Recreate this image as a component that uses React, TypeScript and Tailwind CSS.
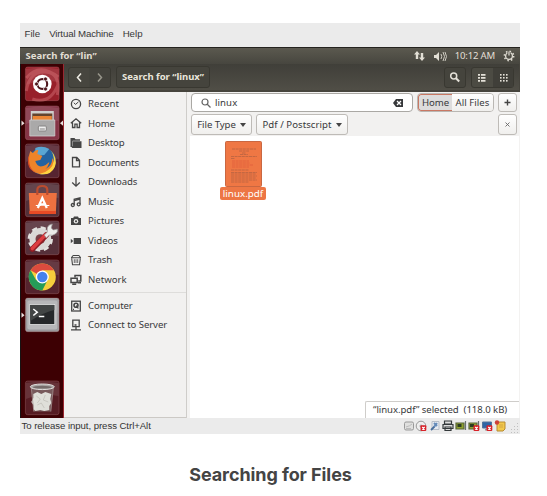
import React from "react";

const rows = [
  { name: "Recent", tracking: "tracking-[0.02px]" },
  { name: "Home", tracking: "tracking-[-0.1px]" },
  { name: "Desktop", tracking: "tracking-[-0.1px]" },
  { name: "Documents", tracking: "tracking-[-0.08px]" },
  { name: "Downloads", tracking: "tracking-[-0.12px]" },
  { name: "Music", tracking: "tracking-[-0.1px]" },
  { name: "Pictures", tracking: "tracking-[0px]" },
  { name: "Videos", tracking: "tracking-[0px]" },
  { name: "Trash", tracking: "tracking-[-0.1px]" },
  { name: "Network", tracking: "tracking-[0px]" },
];
const devices = [
  { name: "Computer", tracking: "tracking-[-0.1px]" },
  { name: "Connect to Server", tracking: "tracking-[-0.07px]" },
];

const glyphs: Record<string, React.ReactNode> = {
  Recent: <><circle cx="6" cy="6" r="4.6" /><path d="M3.8 4.8 5.6 6.4 8.5 3.8" strokeWidth="1" /></>,
  Home: <path d="M.8 6.3 6 1.8l5.200 4.500M2.500 5.500v5h2.400V7.200h2.200v3.300h2.400v-5" />,
  Desktop: <path d="M.5 1h4l1 1.300h4.500v1.400H2.600V10H.5zM3 4.300h8.500V11H1.500L3 9z" fill="#454545" stroke="none" />,
  Documents: <path d="M2.500 1.500h4.300l2.700 2.700v6.600h-7zM6.500 1.500v3h3" />,
  Downloads: <path d="M6 1v9M2.200 6.500 6 10.200l3.800-3.700" />,
  Music: <><path d="M4.200 9V3.200L10 1.800v6.400M4.200 4.600 10 3.200" /><circle cx="2.800" cy="9" r="1.500" /><circle cx="8.700" cy="8.300" r="1.500" /></>,
  Pictures: <><path d="M1 3h2.200l.8-1.500h4L8.800 3H11v7H1z" fill="#454545" stroke="none" /><circle cx="6" cy="6.300" r="2.200" fill="#f2f1f0" stroke="none" /><circle cx="6" cy="6.300" r="1.100" fill="#454545" stroke="none" /></>,
  Videos: <path d="M3.700 3H11v6H3.700zM.8 3.700 3.200 6 .8 8.300z" fill="#454545" stroke="none" />,
  Trash: <><path d="M3 1.500h6M1 3.700h10M1.700 4.500l.8 6.300h7l.8-6.300M1.600 3.500 3 1.500m6 0 1.400 2" strokeWidth="1.100" /><path d="M4.300 5.200V9M6 5.200V9m1.700-3.800V9" strokeWidth=".8" /></>,
  Network: <path d="M5 3.200V1.500h5.800V7H8.200M1 4.200h6.200v4.300H1zM2.200 10.300h4M8 8.800h3" strokeWidth="1.500" />,
  Computer: <><rect x="1.700" y="1.200" width="8.600" height="9.800" /><circle cx="6" cy="5.200" r="2" strokeWidth="1.600" /><path d="m6.300 5.500 2 3M3 9.300h1" /></>,
  "Connect to Server": <path d="M2.800 1.200h6.400v6.500H2.800zM6 7.800v2.600M1 10.800h10M4.500 6h2" />,
};

function Place({ name, tracking }: { name: string; tracking: string }) {
  return (
    <div className="flex h-[19.55px] items-center pl-[6px]">
      <svg viewBox="0 0 12 12" className="h-3 w-3 shrink-0" fill="none" stroke="#454545" strokeWidth="1.3">{glyphs[name]}</svg>
      <span className={`ml-[6px] text-[9.6px] leading-none text-[#38393b] ${tracking}`}>{name}</span>
    </div>
  );
}

function Tile({ children, bg, arrow }: { children: React.ReactNode; bg: string; arrow?: string }) {
  return (
    <div className="flex h-[38.5px] w-[43px] shrink-0 items-start">
      <svg viewBox="0 0 43 38.5" className="h-full w-full">
        <rect x="4.400" y="1" width="33.700" height="33.700" rx="2.2" fill={bg} stroke="#c99498" strokeOpacity=".4" strokeWidth=".7" />
        <path d="M5 3Q20 0 37.500 3v13Q20 13 5 19z" fill="#fff" opacity=".1" />
        <g transform="translate(4.300 1)">{children}</g>
        {arrow && <path d="m.5 15.6 3 2.6-3 2.6z" fill="#e8e0df" />}
        {arrow === "both" && <path d="m42 15.6-3 2.6 3 2.6z" fill="#e8e0df" />}
      </svg>
    </div>
  );
}

function Launcher() {
  return (
    <div className="flex w-[44px] shrink-0 flex-col border-r border-[#9b2730] border-l border-l-[#171313] bg-[#3d0003] pt-[2px]">
      <Tile bg="#98202a">
        <path d="M1 11Q14-5 33 10M1 24Q4 4 20 5t12 23M7 32Q25 38 33 17" stroke="#d87378" strokeWidth="3" opacity=".45" fill="none" />
        <circle cx="17" cy="17" r="9.3" fill="#fff" />
        <circle cx="17" cy="17" r="4.9" fill="none" stroke="#4d151b" strokeWidth="2.100" />
        <path d="m17 17-6.500 0M17 17l3.500-6M17 17l3.500 6" stroke="#fff" strokeWidth="1" />
        <circle cx="11.200" cy="17" r="2" fill="#4d151b" stroke="#fff" strokeWidth=".7" />
        <circle cx="20.200" cy="12" r="2" fill="#4d151b" stroke="#fff" strokeWidth=".7" />
        <circle cx="20.200" cy="22" r="2" fill="#4d151b" stroke="#fff" strokeWidth=".7" />
        <circle cx="17" cy="17" r="3.400" fill="#fff" />
      </Tile>
      <Tile bg="#853446" arrow="both">
        <path d="M5.500 5h23v10h-23z" fill="#d0cecc" />
        <path d="M7 7.500h20v7H7z" fill="#63432d" /><path d="M7.500 10h19v4.500h-19z" fill="#eb8534" />
        <path d="M4.500 14h25v16h-25z" fill="#aaa9a9" stroke="#d2d0d0" strokeWidth=".8" />
        <rect x="13" y="20" width="8" height="5" rx="1" fill="#eee" stroke="#858383" />
        <path d="M14.500 23h5" stroke="#858383" />
      </Tile>
      <Tile bg="#562430">
        <circle cx="17" cy="17" r="13.600" fill="#2463a0" />
        <path d="M10 4q7-3 14 1l-5 6-9 1z" fill="#5aa6d2" />
        <path d="M5 7 7.500 9Q10 5.500 13 6l-1 4 5 2-2 4-5 1q2 7 8 5 3-1 6-4-1 5-4 7 7-3 7-11Q30 19 28 23 23 32 14 30 2 27 3 14z" fill="#ed8429" />
        <path d="M25 6q8 8 4.500 17-4 9-15.500 7 13-3 14.500-13Q29 11 25 6z" fill="#ffd340" />
        <path d="M4 11Q2 25 12 29 1 26 3 14z" fill="#d64b25" />
      </Tile>
      <Tile bg="#533039">
        <path d="M3.500 10h28l-1 21h-26z" fill="#ed7140" />
        <path d="M4 28h26.500v3H4z" fill="#e74a25" />
        <path d="M12 12V7q0-4 5-4t5 4v5" stroke="#bb4c2f" strokeWidth="2.200" fill="none" />
        <path d="m12.500 25 4.500-10 4.500 10M13.500 21.500h7" stroke="#fff" strokeWidth="2.300" fill="none" />
        <path d="M10.500 22.500h5M20 22.500h4" stroke="#fff" strokeWidth="1.200" />
      </Tile>
      <Tile bg="#56303a">
        <circle cx="15" cy="18" r="10.900" fill="#dedddb" stroke="#e2e0de" strokeWidth="3.500" strokeDasharray="5 3.560" />
        <circle cx="15" cy="18" r="10.500" fill="#dad8d6" /><circle cx="15" cy="18" r="4.800" fill="#773f46" />
        <path d="M7 28 21 14" stroke="#921e24" strokeWidth="5.500" strokeLinecap="round" />
        <path d="M7 27.500 20 14" stroke="#dd3d40" strokeWidth="3.300" strokeLinecap="round" />
        <path d="m19 14 3-3q-1-5 2-7l3-1-1 4 2 2 4-1q1 3-2 5-3 2-6 1l-3 3z" fill="#ecebe9" stroke="#999493" strokeWidth=".7" />
      </Tile>
      <Tile bg="#55242e">
        <circle cx="17" cy="17" r="13.500" fill="#f5ce3c" />
        <path d="M17 17 5.300 10.200A13.500 13.500 0 0 1 28.700 10.200H17z" fill="#db4b3e" />
        <path d="m17 17-6 3.500L5.300 10.200A13.500 13.500 0 0 0 17 30.500l5-10z" fill="#259c58" />
        <circle cx="17" cy="17" r="6.500" fill="#fff" /><circle cx="17" cy="17" r="5.200" fill="#4482ed" />
      </Tile>
      <Tile bg="#9b999c" arrow="left">
        <rect x="2" y="2.500" width="30" height="29" rx="2" fill="#b7b7b9" />
        <rect x="4.500" y="6.500" width="25" height="20" fill="#26282a" stroke="#e5e5e5" strokeWidth=".8" />
        <path d="M5 7h24v5Q19 14 5 23z" fill="#424545" />
        <path d="m8 11 4 3.200-4 3.300M13.500 18.500H19" fill="none" stroke="white" strokeWidth="1.500" />
      </Tile>
      <div className="mt-auto h-[38.5px]">
        <Tile bg="#561c23">
          <path d="m6 7 2.500 23.500h17L28 7z" fill="#77595b" />
          <path d="m8 13 4-2 4 2 4-2 6 2-1 5 1 4-2 3v4l-5 1-4-1-5 1-2-2v-4l-2-3 2-4z" fill="#dfdfd9" />
          <path d="m11 15 4 3-3 4m8-8-2 5 5 2m-11 3 4-2 3 5" fill="none" stroke="#c5c4bd" strokeWidth=".9" />
          <path d="M6 7 8.500 30.500M28 7l-2.500 23.500" stroke="#a3908f" strokeWidth=".8" />
          <ellipse cx="17" cy="5.800" rx="12" ry="2.800" fill="#aaa6a5" stroke="#dedbd9" />
          <ellipse cx="17" cy="6.200" rx="9.500" ry="1.400" fill="#766c6b" />
        </Tile>
      </div>
    </div>
  );
}

const edge = "border border-[#bebbb7] bg-gradient-to-b from-white to-[#f0efed] rounded-[3px]";

function StatusIcons() {
  return (
    <svg width="117" height="15" viewBox="0 0 117 15">
      <rect x="1.500" y="3" width="9" height="8" rx="1.500" fill="#e0e0df" stroke="#999" /><path d="M3 8q4-1 6-3M3 9.500h5" stroke="#bbb" fill="none" />
      <circle cx="18" cy="7" r="4.800" fill="#eee" stroke="#999" /><circle cx="18" cy="7" r="1.500" fill="#aaa" />
      <path d="M29 2.500h7v8h-7z" fill="#e6eaf0" stroke="#b7bec8" /><path d="m28 11 3.500-3.500" stroke="#476d9b" strokeWidth="1.800" /><path d="m31 4 3 3m-3 1 3-4" stroke="#658bb9" strokeWidth="2" />
      <path d="M41.500 2h7v3h-7zM40 5.500h10v4H40zM42 8h6v3.500h-6z" fill="#ddd" stroke="#34393b" strokeWidth="1.200" />
      <path d="M53 4h8v6h-8z" fill="#8fa12e" stroke="#59653a" strokeWidth="1.200" /><path d="M54.500 5h4v3h-4z" fill="#2b3b22" /><path d="M62.500 2v9" stroke="#6b7175" strokeWidth="1.200" />
      <path d="M66 4h8v6h-8z" fill="#8fa12e" stroke="#59653a" strokeWidth="1.200" /><path d="M67 5h4v3h-4z" fill="#2b3b22" /><path d="M75.500 2v9" stroke="#6b7175" strokeWidth="1.200" />
      <path d="M79.500 3h9v6h-9z" fill="#2e65a5" stroke="#54749b" /><path d="M82 10h5v1.500h-5z" fill="#999" />
      {[20, 73, 86].map((x) => <g key={x}><rect x={x - 2.500} y="6.300" width="5.800" height="5.800" rx="1" fill="#d82128" /><path d={`m${x - .8} 8 2.500 2.500m0-2.500-2.500 2.500`} stroke="white" strokeWidth="1.200" /></g>)}
      <path d="M94 3h8v7l-2 2h-6z" fill="#f2c84b" stroke="#b78b32" /><path d="M96 6h4m-4 2h4" stroke="#d4a642" /><circle cx="94" cy="3.500" r="2.200" fill="#cf4037" />
      <g fill="#c0c0c0">{[[114, 4], [111, 7], [114, 7], [108, 10], [111, 10], [114, 10], [108, 13], [111, 13], [114, 13]].map(([x, y]) => <rect key={`${x}-${y}`} x={x} y={y} width="1" height="1" />)}</g>
    </svg>
  );
}

export default function App() {
  return (
    <main className="h-[496px] w-[547px] overflow-hidden bg-white pl-5 pt-[23px] font-['Noto_Sans',sans-serif]">
      <div className="flex h-[411px] w-[500px] flex-col overflow-hidden bg-[#ebebeb]">
        <div className="flex h-6 items-center gap-[9px] pl-[4.5px] pb-px font-['Liberation_Sans',sans-serif] text-[9.700px] text-[#383838]">
          <span>File</span><span className="tracking-[-0.14px]">Virtual Machine</span><span>Help</span>
        </div>
        <div className="flex h-[17px] shrink-0 items-center border-t border-[#24231f] bg-gradient-to-b from-[#5b594f] to-[#47463f] pl-[5.5px] text-[#e2dfd5]">
          <span className="text-[9.500px] font-bold leading-none tracking-[0.030px]">Search for “lin”</span>
          <svg className="ml-auto" width="39" height="15" viewBox="0 0 39 15" fill="#e2dfd5">
            <path d="m3 2 3 3.500H4.200V10H1.800V5.500H0zM8 12 5 8.500h1.800V4h2.400v4.500H11z" />
            <path d="M20 6h2l3-3v9l-3-3h-2z" /><path d="M27 5q1.500 2.500 0 5m2-7q3 4.500 0 9m2-9q3 4.500 0 9" fill="none" stroke="#cfccc2" strokeWidth="1" />
          </svg>
          <span className="ml-[2px] text-[9.600px] leading-none tracking-[-0.200px]">10:12 AM</span>
          <svg className="ml-[8px] mr-[5px]" width="12" height="12" viewBox="0 0 12 12" fill="none" stroke="#e2dfd5">
            <circle cx="6" cy="6" r="3.400" strokeWidth="1.300" /><circle cx="6" cy="6" r="4.700" strokeWidth="1.500" strokeDasharray="1.500 2.190" /><path d="M6 2v3" stroke="#504e46" strokeWidth="3" /><path d="M6 1.500v4" strokeWidth="1.200" />
          </svg>
        </div>
        <div className="flex h-[354px] shrink-0">
          <Launcher />
          <div className="flex w-[456px] flex-col bg-white">
            <div className="flex h-[28px] shrink-0 items-center border-b-2 border-[#46443d] border-r bg-gradient-to-b from-[#403f39] to-[#504e46] pl-[4px] text-[#e9e6dc]">
              <div className="flex h-[21px] w-[43px] overflow-hidden rounded-[3px] border border-[#393831] bg-[#47463f]">
                <svg width="41" height="19" viewBox="0 0 41 19" fill="none" strokeWidth="1.500"><path d="M20.500 0H41v19H20.500z" fill="#43423c" /><path d="m12 5.500-3.500 4 3.500 4" stroke="#eeece4" /><path d="m29 5.500 3.500 4-3.500 4" stroke="#98968b" /></svg>
              </div>
              <div className="ml-[5px] flex h-[22px] w-[94px] items-center justify-center rounded-[3px] border border-[#393831] bg-[#45443d] text-[9.500px] font-bold leading-none whitespace-nowrap tracking-[-0.030px]">Search for “linux”</div>
              <div className="ml-auto flex h-[21px] w-[22px] items-center justify-center rounded-[3px] border border-[#393831] bg-[#45443d]"><svg width="12" height="12" viewBox="0 0 12 12" fill="none" stroke="#e4e1d8" strokeWidth="1.500"><circle cx="4.700" cy="5" r="3" /><path d="m7 7.300 3.200 3.200" strokeWidth="2" /></svg></div>
              <div className="ml-[5px] mr-[5px] flex h-[21px] w-[43px] rounded-[3px] border border-[#393831] bg-[#4c4b43]">
                <svg width="41" height="19" viewBox="0 0 41 19" fill="#e4e1d8"><path d="M21 0h20v19H21z" fill="#403f39" />{[6, 9, 12].map(y => <g key={y}><path d={`M6 ${y}h2v1.700H6zm3 0h4.500v1.700H9z`} />{[28, 31, 34].map(x => <rect key={x} x={x} y={y} width="1.600" height="1.600" />)}</g>)}</svg>
              </div>
            </div>
            <div className="flex min-h-0 flex-1">
              <div className="w-[122px] shrink-0 border-b border-[#ccc9c5] bg-[#f2f1f0] pt-[2px]">
                {rows.map(r => <Place key={r.name} {...r} />)}
                <div className="mb-[3px] mt-[2.500px] h-px bg-[#dedddb]" />
                {devices.map(r => <Place key={r.name} {...r} />)}
              </div>
              <div className="flex min-w-0 flex-1 border-l border-[#cfcdca] bg-[#f3f2f1] pl-[3px] pr-px">
                <div className="flex min-w-0 flex-1 flex-col bg-white">
                  <div className="h-[44px] shrink-0 bg-[#f2f1f0] pl-[1px] pr-[2px] pt-[1px] text-[9.600px] leading-none text-[#38393b]">
                    <div className="flex h-[19px]">
                      <div className="flex w-[222px] items-center rounded-[4px] border border-[#aaa8a4] bg-white pl-[8px]">
                        <svg width="12" height="12" viewBox="0 0 12 12" fill="none" stroke="#666" strokeWidth="1.200"><circle cx="5" cy="5" r="3" /><path d="m7 7 3.500 3.500" /></svg>
                        <span className="ml-[3px] tracking-[0.080px]">linux</span>
                        <svg className="ml-auto mr-[8px]" width="12" height="10" viewBox="0 0 12 10"><path d="m1 5 3-4h7v8H4z" fill="#36383a" /><path d="m5 3 4 4m0-4L5 7" stroke="#fff" strokeWidth="1.300" /></svg>
                      </div>
                      <div className="ml-[4px] flex w-[77px] overflow-hidden rounded-[4px] border border-[#bab7b3]">
                        <span className="flex w-[34px] items-center justify-center rounded-l-[3px] border border-r-0 border-[#c97864] bg-[#dddcdc] tracking-[-0.100px]">Home</span><span className="flex flex-1 items-center justify-center bg-gradient-to-b from-white to-[#f0efed] tracking-[0.050px]">All Files</span>
                      </div>
                      <div className={`ml-auto flex w-[19px] items-center justify-center ${edge}`}><svg width="9" height="9"><path d="M1.500 4.500h6M4.500 1.500v6" stroke="#444" strokeWidth="1.400" /></svg></div>
                    </div>
                    <div className="mt-[2px] flex h-[21px]">
                      <div className={`flex w-[61px] items-center justify-center gap-[4px] whitespace-nowrap tracking-[-0.060px] ${edge}`}>File Type <svg width="6" height="4"><path d="M0 0h6L3 4z" fill="#454545" /></svg></div>
                      <div className={`ml-[4px] flex w-[92px] items-center justify-center gap-[4px] whitespace-nowrap tracking-[0.050px] ${edge}`}>Pdf / Postscript <svg width="6" height="4"><path d="M0 0h6L3 4z" fill="#454545" /></svg></div>
                      <div className={`ml-auto flex w-[19px] items-center justify-center ${edge}`}><svg width="5" height="5"><path d="m.5.5 4 4m0-4-4 4" stroke="#666" strokeWidth=".900" /></svg></div>
                    </div>
                  </div>
                  <div className="ml-[30px] mt-[5px] flex w-[46px] flex-col items-center">
                    <svg width="37" height="46" viewBox="0 0 37 46"><rect x=".5" y=".5" width="36" height="45" rx="1" fill="#ef7744" stroke="#c96741" /><g stroke="#9e5a40" strokeWidth=".55" strokeDasharray="3 .6"><path d="M7 8h24M14 10h10M17 12h4M15 13.500h8M6 15.500h26M6 17.500h4M6 29h18" /><path d="M7 20h17M7 22h18M7 24h21M7 26h17" stroke="#ce4432" strokeWidth=".4" /><path d="M6 31.500h26M6 33h25M6 35h26M6 37h25M6 39h26M6 41h18" /></g></svg>
                    <span className="flex h-[13px] w-full items-center justify-center rounded-[2px] bg-[#ed7644] text-[9.800px] leading-none text-white">linux.pdf</span>
                  </div>
                  <div className="mt-auto ml-auto flex h-[17px] w-[154px] items-center rounded-tl-[2px] border-l border-t border-[#cfcdca] pl-[7px] text-[9.600px] leading-none whitespace-nowrap tracking-[-0.060px] text-[#38393b]"><span>“linux.pdf” selected</span><span className="ml-[5px]">(118.0 kB)</span></div>
                </div>
              </div>
            </div>
          </div>
        </div>
        <div className="flex h-4 shrink-0 items-center justify-between pl-[1.500px] font-['Liberation_Sans',sans-serif] text-[9.600px] leading-none text-[#333]"><span className="tracking-[-0.050px]">To release input, press Ctrl+Alt</span><StatusIcons /></div>
      </div>
      <h1 className="ml-[-20px] mt-[27px] w-[541px] text-center font-['Inter',sans-serif] text-[18px] font-bold leading-[27px] tracking-[-0.080px] text-[#444]">Searching for Files</h1>
    </main>
  );
}
